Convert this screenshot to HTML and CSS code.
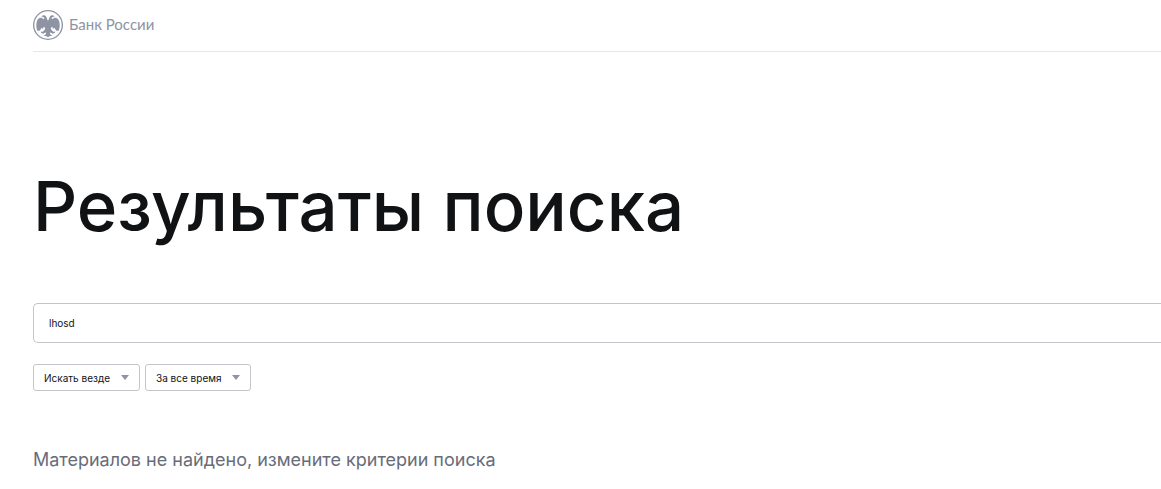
FILE: index.html
```html
<!DOCTYPE html>
<html lang="ru">
<head>
<meta charset="utf-8">
<meta name="viewport" content="width=device-width, initial-scale=1">
<title>Результаты поиска</title>
<link rel="stylesheet" href="styles.css">
</head>
<body>
<header class="header">
  <a class="brand" href="#">
    <svg class="brand-mark" viewBox="0 0 90 90" aria-hidden="true">
      <circle cx="45" cy="45" r="43" fill="none" stroke="currentColor" stroke-width="4"/>
      <path fill="currentColor" d="M45 32C42 28 42 25 40 21C37 15 31 14 25 19L30 21C34 22 35 25 33 28C25 20 17 22 12 32C9 42 9 53 13 62L20 62L26 53L30 57L32 50L37 54L34 61L28 66L23 64L25 69L31 71L38 67L39 72L32 78L39 78L45 82Z"/>
      <path fill="currentColor" transform="matrix(-1 0 0 1 90 0)" d="M45 32C42 28 42 25 40 21C37 15 31 14 25 19L30 21C34 22 35 25 33 28C25 20 17 22 12 32C9 42 9 53 13 62L20 62L26 53L30 57L32 50L37 54L34 61L28 66L23 64L25 69L31 71L38 67L39 72L32 78L39 78L45 82Z"/>
    </svg>
    <span class="brand-name">Банк России</span>
  </a>
</header>
<main class="content">
  <h1 class="title">Результаты поиска</h1>
  <form class="search">
    <input class="search-input" type="text" aria-label="Поиск" value="lhosd">
    <div class="filters">
      <span class="filter">
        <select class="filter-select" aria-label="Где искать"><option>Искать везде</option></select>
        <svg class="filter-arrow" viewBox="0 0 8 5" aria-hidden="true"><path d="M0 0H8L4 5Z" fill="currentColor"/></svg>
      </span>
      <span class="filter">
        <select class="filter-select" aria-label="Период"><option>За все время</option></select>
        <svg class="filter-arrow" viewBox="0 0 8 5" aria-hidden="true"><path d="M0 0H8L4 5Z" fill="currentColor"/></svg>
      </span>
    </div>
  </form>
  <p class="message">Материалов не найдено, измените критерии поиска</p>
</main>
</body>
</html>
```
FILE: styles.css
```css
* {
  box-sizing: border-box;
}

body {
  margin: 0;
  padding-left: 33px;
  background: #fff;
  color: #101214;
  font-family: Inter, "Liberation Sans", sans-serif;
}

.header {
  display: flex;
  padding: 10px 0 11px;
  border-bottom: 1px solid #e6e7ea;
}

.brand {
  display: flex;
  align-items: center;
  gap: 6px;
  color: #8e94a3;
  text-decoration: none;
}

.brand-mark {
  width: 30px;
  height: 30px;
}

.brand-name {
  padding-bottom: 2px;
  font-family: Lato, sans-serif;
  font-size: 15px;
  line-height: 20px;
}

.title {
  margin: 0;
  padding-top: 112px;
  font-size: 69px;
  font-weight: 500;
  line-height: 84px;
}

.search {
  padding-top: 55px;
}

.search-input {
  display: block;
  width: 100%;
  height: 40px;
  padding: 0 15px;
  border: 1px solid #c4c5ca;
  border-right: 0;
  border-radius: 5px 0 0 5px;
  background: #fff;
  color: #101214;
  font: 10px/16px Inter, sans-serif;
}

.filters {
  display: flex;
  gap: 5px;
  padding-top: 21px;
}

.filter {
  display: inline-grid;
  align-items: center;
  color: #8e94a3;
}

.filter-select,
.filter-arrow {
  grid-area: 1 / 1;
}

.filter-select {
  appearance: none;
  height: 27px;
  padding: 0 28px 0 10px;
  border: 1px solid #c4c5ca;
  border-radius: 3px;
  background: #fff;
  color: #101214;
  font: 10px/16px Inter, sans-serif;
}

.filter-arrow {
  justify-self: end;
  width: 8px;
  height: 5px;
  margin-right: 11px;
  pointer-events: none;
}

.message {
  margin: 0;
  padding: 56px 0 16px;
  color: #686c7a;
  font-size: 18px;
  line-height: 26px;
}
```
